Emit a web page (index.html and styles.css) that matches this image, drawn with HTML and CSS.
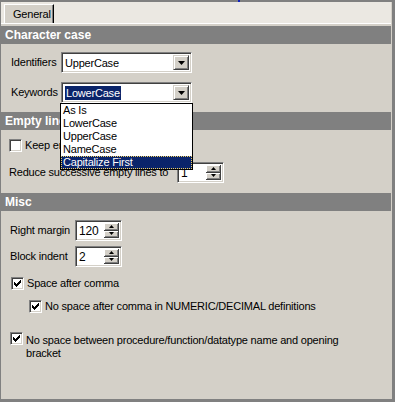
FILE: index.html
```html
<!DOCTYPE html>
<html lang="en">
<head>
    <meta charset="UTF-8">
    <title>Formatter options</title>
    <link rel="stylesheet" href="styles.css">
</head>
<body>
<div class="window">
    <div class="topline"><span class="mark"></span></div>
    <div class="tabstrip">
        <div class="tab">General</div>
    </div>

    <div class="page">
        <div class="group-head">Character case</div>
        <div class="group case-group">
            <div class="field">
                <span class="label case-label">Identifiers</span>
                <div class="combo">
                    <span class="combo-text">UpperCase</span>
                    <span class="drop-btn"><svg width="7" height="4" viewBox="0 0 7 4"><path d="M0 0h7L3.5 4z" fill="#000"/></svg></span>
                </div>
            </div>
            <div class="field">
                <span class="label case-label">Keywords</span>
                <div class="combo">
                    <span class="combo-text"><span class="selected-text">LowerCase</span></span>
                    <span class="drop-btn"><svg width="7" height="4" viewBox="0 0 7 4"><path d="M0 0h7L3.5 4z" fill="#000"/></svg></span>
                    <ul class="droplist">
                        <li>As Is</li>
                        <li>LowerCase</li>
                        <li>UpperCase</li>
                        <li>NameCase</li>
                        <li class="current">Capitalize First</li>
                    </ul>
                </div>
            </div>
        </div>

        <div class="group-head">Empty lines</div>
        <div class="group empty-group">
            <div class="check-row keep-row">
                <span class="checkbox"></span>
                <span>Keep empty lines</span>
            </div>
            <div class="field">
                <span class="label reduce-label">Reduce successive empty lines to</span>
                <div class="spin">
                    <span class="spin-text">1</span>
                    <span class="spin-btns">
                        <span class="spin-btn"><svg width="5" height="3" viewBox="0 0 5 3"><path d="M2.5 0L5 3H0z" fill="#000"/></svg></span>
                        <span class="spin-btn"><svg width="5" height="3" viewBox="0 0 5 3"><path d="M0 0h5L2.5 3z" fill="#000"/></svg></span>
                    </span>
                </div>
            </div>
        </div>

        <div class="group-head">Misc</div>
        <div class="group misc-group">
            <div class="field">
                <span class="label misc-label">Right margin</span>
                <div class="spin">
                    <span class="spin-text">120</span>
                    <span class="spin-btns">
                        <span class="spin-btn"><svg width="5" height="3" viewBox="0 0 5 3"><path d="M2.5 0L5 3H0z" fill="#000"/></svg></span>
                        <span class="spin-btn"><svg width="5" height="3" viewBox="0 0 5 3"><path d="M0 0h5L2.5 3z" fill="#000"/></svg></span>
                    </span>
                </div>
            </div>
            <div class="field indent-field">
                <span class="label misc-label">Block indent</span>
                <div class="spin">
                    <span class="spin-text">2</span>
                    <span class="spin-btns">
                        <span class="spin-btn"><svg width="5" height="3" viewBox="0 0 5 3"><path d="M2.5 0L5 3H0z" fill="#000"/></svg></span>
                        <span class="spin-btn"><svg width="5" height="3" viewBox="0 0 5 3"><path d="M0 0h5L2.5 3z" fill="#000"/></svg></span>
                    </span>
                </div>
            </div>
            <div class="check-row comma-row">
                <span class="checkbox checked"><svg width="7" height="7" viewBox="0 0 7 7"><path d="M0 2h1v3H0zM1 3h1v3H1zM2 4h1v3H2zM3 3h1v3H3zM4 2h1v3H4zM5 1h1v3H5zM6 0h1v3H6z" fill="#000"/></svg></span>
                <span>Space after comma</span>
            </div>
            <div class="check-row numeric-row">
                <span class="checkbox checked"><svg width="7" height="7" viewBox="0 0 7 7"><path d="M0 2h1v3H0zM1 3h1v3H1zM2 4h1v3H2zM3 3h1v3H3zM4 2h1v3H4zM5 1h1v3H5zM6 0h1v3H6z" fill="#000"/></svg></span>
                <span>No space after comma in NUMERIC/DECIMAL definitions</span>
            </div>
            <div class="check-row bracket-row">
                <span class="checkbox checked"><svg width="7" height="7" viewBox="0 0 7 7"><path d="M0 2h1v3H0zM1 3h1v3H1zM2 4h1v3H2zM3 3h1v3H3zM4 2h1v3H4zM5 1h1v3H5zM6 0h1v3H6z" fill="#000"/></svg></span>
                <span class="wrap-text">No space between procedure/function/datatype name and opening bracket</span>
            </div>
        </div>
    </div>
</div>
</body>
</html>
```

FILE: styles.css
```css
* {
    box-sizing: border-box;
}
body {
    margin: 0;
    width: 395px;
    height: 402px;
    overflow: hidden;
    background-color: #d4d0c8;
    font-family: "Liberation Sans", Arial, sans-serif;
    font-size: 11px;
    letter-spacing: -0.2px;
    color: #000;
}
.window {
    height: 402px;
    border-left: 1px solid #808080;
    border-right: 3px solid #808080;
    border-bottom: 3px solid #808080;
    padding-right: 1px;
    display: flex;
    flex-direction: column;
}
.topline {
    height: 2px;
    background-color: #808080;
    margin-left: -1px;
    margin-right: -4px;
}
.mark {
    display: block;
    width: 2px;
    height: 2px;
    margin-left: 238px;
    background-color: #1020c0;
}
.tabstrip {
    height: 22px;
    background-color: #ebe8e2;
    border-bottom: 1px solid #fff;
    padding: 2px 0 0 3px;
    display: flex;
}
.tab {
    width: 50px;
    height: 19px;
    border-left: 1px solid #fff;
    border-top: 1px solid #fff;
    border-right: 1px solid #000;
    box-shadow: inset -1px 0 #808080;
    background-color: #d4d0c8;
    padding: 2px 0 0 8px;
    line-height: 14px;
}
.page {
    flex: 1;
    padding-top: 2px;
}
.group-head {
    height: 18px;
    line-height: 18px;
    background-color: #808080;
    color: #fff;
    font-weight: bold;
    font-size: 12px;
    letter-spacing: 0;
    padding-left: 4px;
}
.group {
    padding-left: 10px;
}
.case-group {
    padding-top: 8px;
    padding-bottom: 9px;
    display: flex;
    flex-direction: column;
    gap: 9px;
}
.empty-group {
    padding-top: 8px;
    padding-bottom: 10px;
    padding-left: 8px;
}
.misc-group {
    padding-top: 9px;
    padding-left: 9px;
}
.field {
    display: flex;
    align-items: center;
    height: 21px;
}
.label {
    flex: none;
    line-height: 13px;
}
.case-label {
    width: 50px;
}
.reduce-label {
    width: 168px;
}
.misc-label {
    width: 65px;
}
.indent-field {
    margin-top: 5px;
}

/* sunken edit frame */
.combo,
.spin {
    position: relative;
    height: 21px;
    background-color: #fff;
    border-top: 1px solid #808080;
    border-left: 1px solid #808080;
    border-bottom: 1px solid #fff;
    border-right: 1px solid #fff;
    box-shadow: inset 1px 1px #404040, inset -1px -1px #d4d0c8;
    display: flex;
    align-items: stretch;
    padding: 2px;
}
.combo {
    width: 131px;
}
.combo-text {
    flex: 1;
    display: flex;
    align-items: center;
    padding-left: 1px;
}
.selected-text {
    background-color: #0a246a;
    color: #fff;
    padding: 0 1px;
    line-height: 14px;
}
.drop-btn {
    width: 16px;
    display: flex;
    align-items: center;
    justify-content: center;
    background-color: #d4d0c8;
    border-top: 1px solid #d4d0c8;
    border-left: 1px solid #d4d0c8;
    border-right: 1px solid #404040;
    border-bottom: 1px solid #404040;
    box-shadow: inset 1px 1px #fff, inset -1px -1px #808080;
}
.droplist {
    position: absolute;
    top: 20px;
    left: -2px;
    width: 133px;
    margin: 0;
    padding: 0;
    list-style: none;
    background-color: #fff;
    border: 1px solid #000;
    z-index: 2;
}
.droplist li {
    height: 13px;
    line-height: 13px;
    padding-left: 2px;
}
.droplist li.current {
    background-color: #0a246a;
    color: #fff;
    outline: 1px dotted #f0d060;
    outline-offset: -1px;
}

.spin {
    width: 47px;
}
.spin-text {
    flex: 1;
    display: flex;
    align-items: center;
    padding-left: 1px;
    font-size: 12px;
}
.spin-btns {
    width: 15px;
    display: flex;
    flex-direction: column;
}
.spin-btn {
    flex: 1;
    display: flex;
    align-items: center;
    justify-content: center;
    background-color: #d4d0c8;
    border-right: 1px solid #404040;
    border-bottom: 1px solid #404040;
    box-shadow: inset 1px 1px #fff, inset -1px -1px #808080;
}

/* checkboxes */
.check-row {
    display: flex;
    align-items: center;
    gap: 3px;
    line-height: 13px;
}
.checkbox {
    flex: none;
    width: 13px;
    height: 13px;
    background-color: #fff;
    border-top: 1px solid #808080;
    border-left: 1px solid #808080;
    border-bottom: 1px solid #fff;
    border-right: 1px solid #fff;
    box-shadow: inset 1px 1px #404040, inset -1px -1px #d4d0c8;
    display: flex;
    align-items: center;
    justify-content: center;
}
.keep-row {
    height: 14px;
    margin-bottom: 10px;
}
.comma-row {
    margin-top: 10px;
    margin-left: 1px;
}
.numeric-row {
    margin-top: 10px;
    margin-left: 19px;
}
.bracket-row {
    margin-top: 19px;
    align-items: flex-start;
}
.wrap-text {
    width: 340px;
    margin-top: 2px;
}
```
